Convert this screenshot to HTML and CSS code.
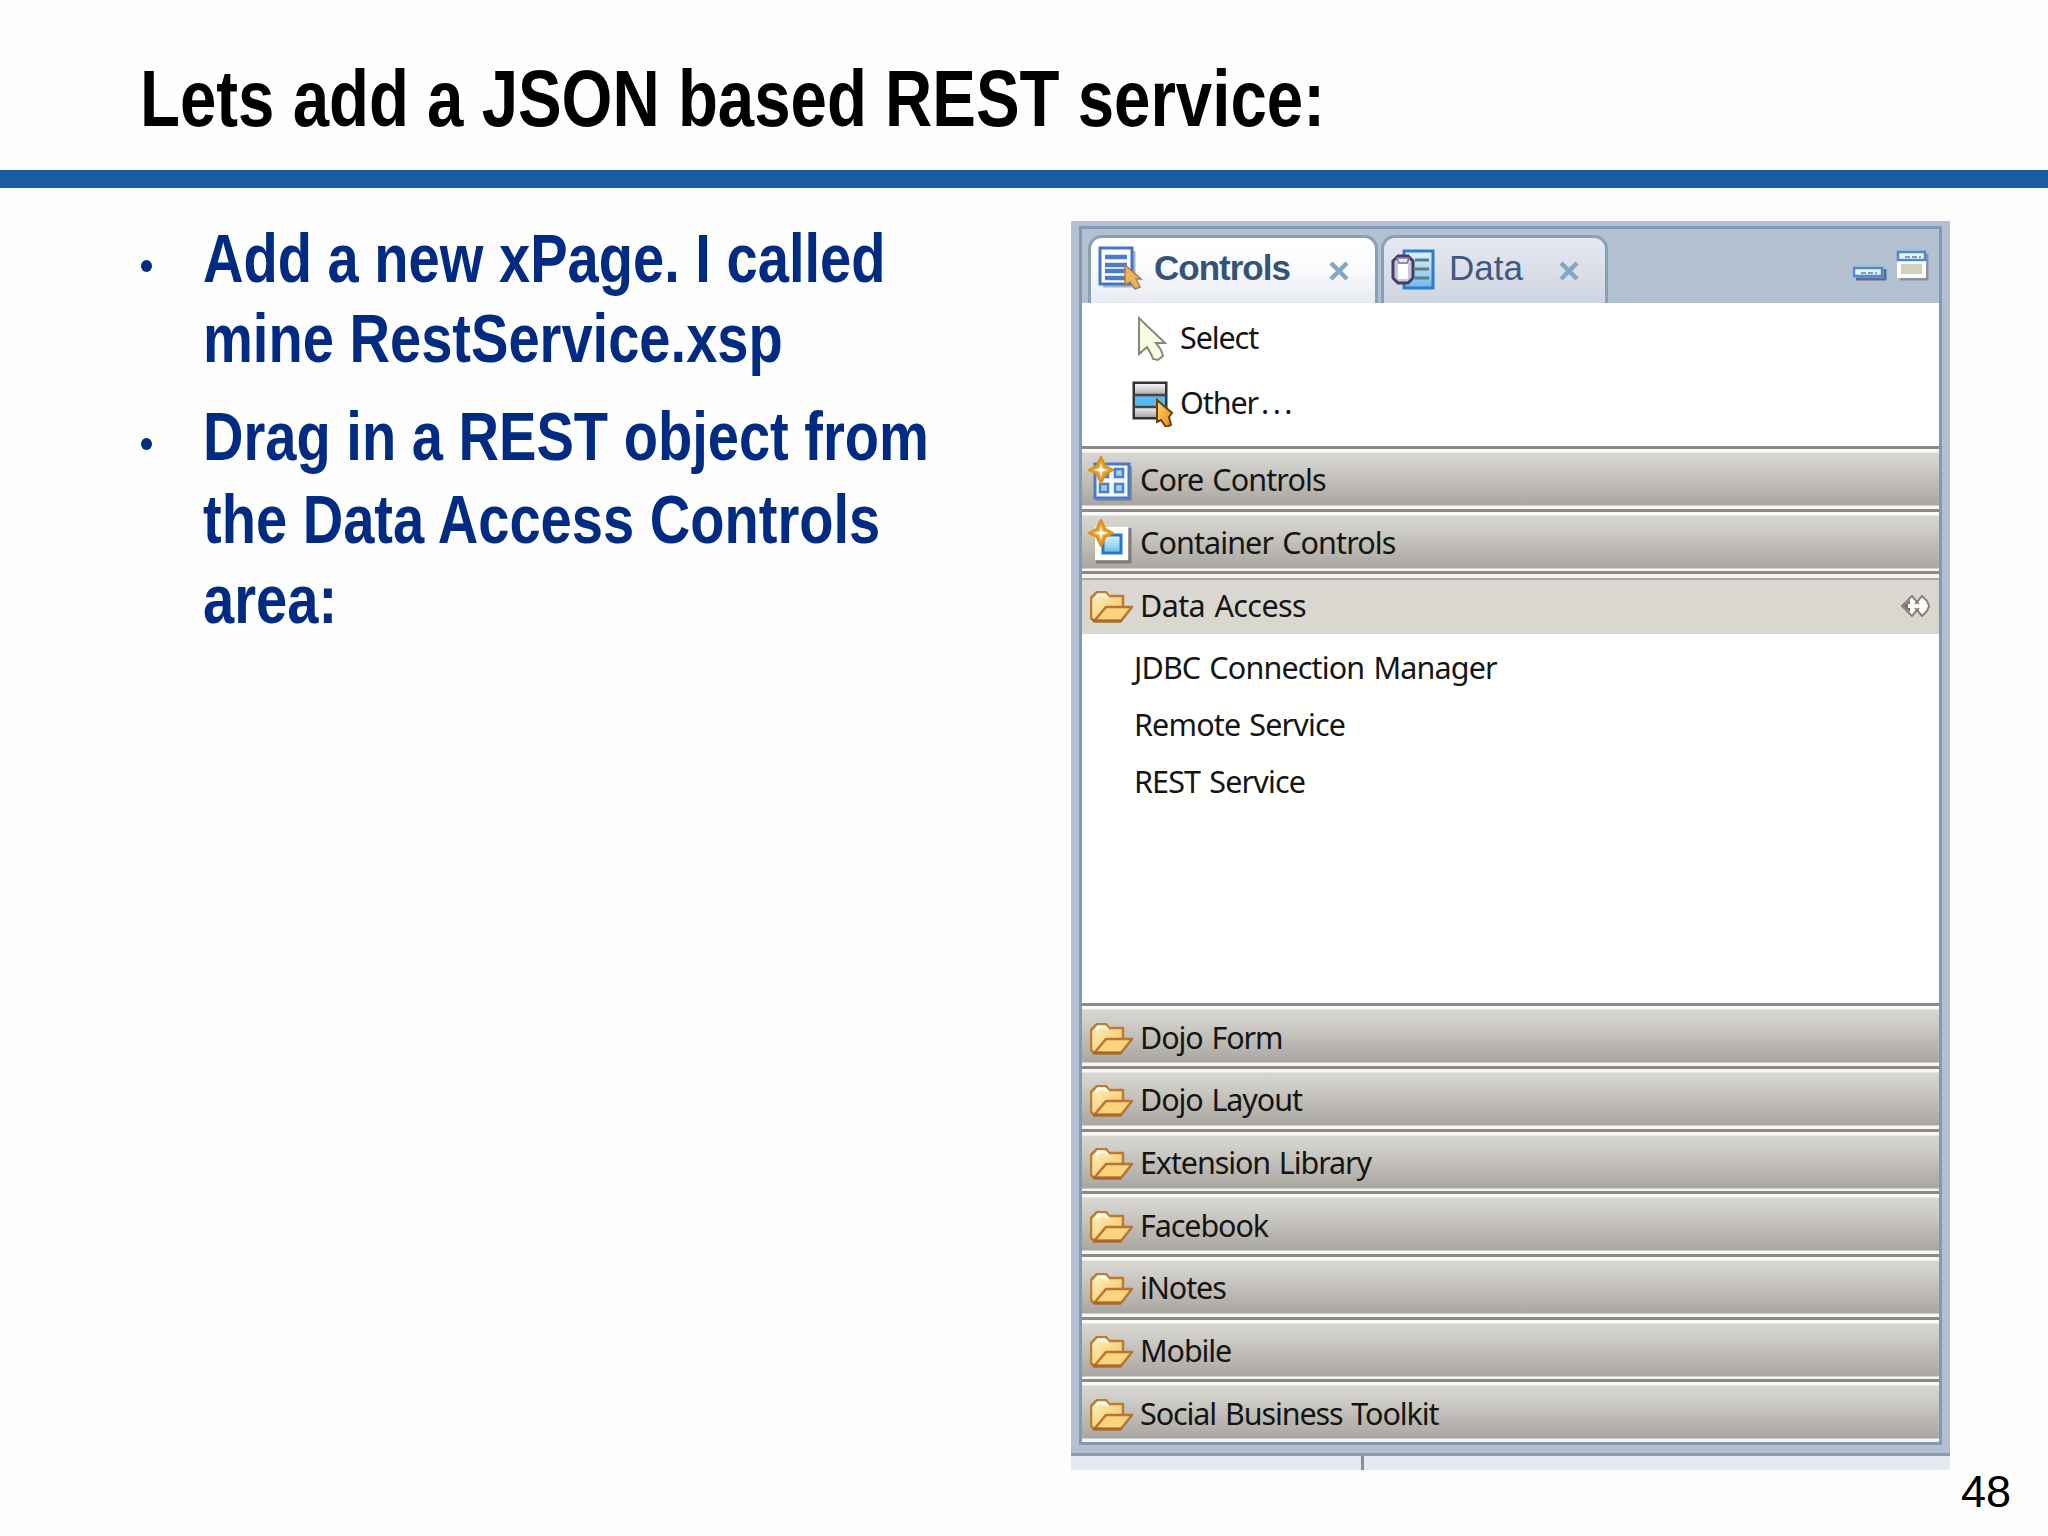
FILE: index.html
```
<!DOCTYPE html>
<html lang="en">

<head>
    <meta charset="UTF-8">
    <meta name="viewport" content="width=device-width, initial-scale=1.0">
    <title>Lets add a JSON based REST service</title>
    <link rel="stylesheet" href="styles.css">
</head>

<body>
    <!-- shared icons -->
    <svg class="sprite" width="0" height="0">
        <defs>
            <linearGradient id="gFolder" x1="0" y1="0" x2="1" y2="1">
                <stop offset="0" stop-color="#fff3c4" />
                <stop offset="1" stop-color="#f5bf56" />
            </linearGradient>
            <linearGradient id="gBlue" x1="0" y1="0" x2="0" y2="1">
                <stop offset="0" stop-color="#e2f6ff" />
                <stop offset="1" stop-color="#6dbbe9" />
            </linearGradient>
            <linearGradient id="gGrey" x1="0" y1="0" x2="0" y2="1">
                <stop offset="0" stop-color="#f4f4f4" />
                <stop offset="1" stop-color="#a9a9a9" />
            </linearGradient>
            <linearGradient id="gOrange" x1="0" y1="0" x2="1" y2="1">
                <stop offset="0" stop-color="#ffd873" />
                <stop offset="1" stop-color="#e58a10" />
            </linearGradient>
            <symbol id="folder" viewBox="0 0 44 32">
                <path d="M1 27V7l3-3 3-3h9l3 4h14v10L31 30H4z" fill="url(#gFolder)" stroke="#bd7b31" stroke-width="2.500" stroke-linejoin="round" />
                <path d="M5 29l11-13h26L31 30H5z" fill="#fbd47d" stroke="#b87430" stroke-width="2.500" stroke-linejoin="round" />
                <path d="M6 7l2-3h7l3 3" fill="none" stroke="#fffbe8" stroke-width="3" />
                <path d="M3 30h28" stroke="#a8672b" stroke-width="3" />
            </symbol>
            <symbol id="star" viewBox="0 0 26 28">
                <path d="M13 1l4 9 8 4-8 4-4 9-4-9-8-4 8-4z" fill="#f5aa2d" stroke="#e0921f" stroke-width="2.500" stroke-linejoin="round" />
                <path d="M13 7l1.500 5.500 5.500 1.500-5.500 1.500-1.500 5.500-1.500-5.500-5.500-1.500 5.500-1.500z" fill="#fff" />
            </symbol>
            <symbol id="cross" viewBox="0 0 20 20">
                <path d="M2 2l16 16M18 2L2 18" stroke="#82a7c0" stroke-width="4.500" />
            </symbol>
        </defs>
    </svg>

    <header class="title">
        <h1>Lets add a JSON based REST service:</h1>
    </header>

    <main class="slide">
        <ul class="bullets">
            <li>
                <span class="dot"></span>
                <p>Add a new xPage. I called<br>mine RestService.xsp</p>
            </li>
            <li>
                <span class="dot"></span>
                <p><span class="first">Drag in a REST object from</span>the Data Access Controls<br>area:</p>
            </li>
        </ul>

        <section class="panel">
            <div class="window">
                <div class="tabs">
                    <div class="tab active">
                        <svg class="tab-icon" width="46" height="46" viewBox="0 0 46 46">
                            <path d="M5 41h31V6" fill="none" stroke="#a9b4c9" stroke-width="3" />
                            <rect x="2" y="3" width="32" height="36" fill="#fff" stroke="#4476c8" stroke-width="3" />
                            <path d="M7 12h22M7 20h22M7 26h20M7 33h20" stroke="#4a7ccd" stroke-width="4.500" />
                            <path d="M27 20v20l5-3 5 7 5-2-4-8h5z" fill="#e9b65c" stroke="#a97a4c" stroke-width="1.500" />
                        </svg>
                        <span>Controls</span>
                        <svg class="close" width="20" height="20"><use href="#cross" /></svg>
                    </div>
                    <div class="tab data">
                        <svg class="tab-icon" width="46" height="46" viewBox="0 0 46 46">
                            <rect x="13" y="6" width="29" height="37" fill="url(#gBlue)" stroke="#2d7bd0" stroke-width="3" />
                            <path d="M24 15h14M24 24h14M24 33h14" stroke="#5e7d80" stroke-width="3" />
                            <path d="M2 16l5-5h10l5 5v17l-5 5H7l-5-5z" fill="#c9c6dc" stroke="#463d66" stroke-width="3" />
                            <path d="M7 19h10v15H7z" fill="#fff" />
                            <path d="M6 13h12l-2 5H8z" fill="#eceaf4" stroke="#7d7799" stroke-width="1.500" />
                        </svg>
                        <span>Data</span>
                        <svg class="close" width="20" height="20"><use href="#cross" /></svg>
                    </div>
                    <svg class="window-buttons" width="76" height="34" viewBox="0 0 76 34">
                        <path d="M3 29h29V19" fill="none" stroke="#5c6f90" stroke-width="3" />
                        <rect x="1" y="18" width="28" height="8" fill="#e9f6ff" stroke="#4d87d6" stroke-width="2.500" />
                        <path d="M47 29h27V4" fill="none" stroke="#8a93a5" stroke-width="3" />
                        <rect x="46" y="12" width="25" height="14" fill="#d2d1c4" stroke="#fffff8" stroke-width="4" />
                        <rect x="45" y="2" width="27" height="8" fill="#e9f6ff" stroke="#4d87d6" stroke-width="2.500" />
                        <path d="M8 23h16M52 7h16" stroke="#7f9dbd" stroke-width="2" stroke-dasharray="5 2" />
                    </svg>
                </div>

                <div class="tools">
                    <div class="tool">
                        <svg width="46" height="48" viewBox="0 0 46 48">
                            <path d="M10 4v36l8-7 5 9 1 3 5 1 5-4-2-6-5-7h9z" fill="#fbfce2" stroke="#85877a" stroke-width="2" />
                        </svg>
                        <span>Select</span>
                    </div>
                    <div class="tool">
                        <svg width="46" height="48" viewBox="0 0 46 48">
                            <rect x="5" y="4" width="32" height="35" fill="url(#gGrey)" stroke="#333" stroke-width="3" />
                            <rect x="6" y="5" width="30" height="11" fill="url(#gGrey)" />
                            <rect x="6" y="17" width="30" height="10" fill="#58b8f0" />
                            <rect x="6" y="28" width="30" height="10" fill="url(#gGrey)" />
                            <path d="M5 16h32M5 28h32" stroke="#444" stroke-width="2.500" />
                            <path d="M28 21v22l4-2 5 7 5-2-2-8 3-4z" fill="url(#gOrange)" stroke="#6d3f0b" stroke-width="2" />
                        </svg>
                        <span>Other<span class="ellipsis">...</span></span>
                    </div>
                </div>

                <div class="group">
                    <svg class="new-icon" width="44" height="46" viewBox="0 0 44 46">
                        <path d="M8 44h35V10" fill="none" stroke="#8b8f92" stroke-width="2" />
                        <rect x="7" y="8" width="34" height="34" fill="#f2f8ff" stroke="#4b7bc4" stroke-width="3" />
                        <path d="M27 13h8v8h-8zM12 28h8v8h-8zM27 28h8v8h-8zM12 13h8v8h-8z" fill="#a9cbee" stroke="#4a80cc" stroke-width="2.500" />
                        <use href="#star" x="0" y="0" width="26" height="28" />
                    </svg>
                    <span>Core Controls</span>
                </div>
                <div class="group">
                    <svg class="new-icon" width="44" height="46" viewBox="0 0 44 46">
                        <path d="M8 43h34V9" fill="none" stroke="#7f7c7a" stroke-width="3" />
                        <rect x="7" y="8" width="33" height="33" fill="#fff" />
                        <rect x="15" y="16" width="18" height="18" fill="url(#gBlue)" stroke="#2878c8" stroke-width="3" />
                        <use href="#star" x="0" y="0" width="26" height="28" />
                    </svg>
                    <span>Container Controls</span>
                </div>
                <div class="group open">
                    <svg class="folder" width="44" height="32"><use href="#folder" /></svg>
                    <span>Data Access</span>
                    <svg class="pin" width="30" height="22" viewBox="0 0 30 22">
                        <path d="M1 11L11 1l5 6 5-6 5 5 2 5-2 5-5 5-5-6-5 6z" fill="#fff" stroke="#85827c" stroke-width="2" />
                        <path d="M2 11l7-6v4H7v4h2v4z" fill="#77746f" />
                        <path d="M14 9l2-2 2 2M14 13l2 2 2-2" fill="none" stroke="#77746f" stroke-width="1.500" />
                    </svg>
                </div>
                <ul class="items">
                    <li>JDBC Connection Manager</li>
                    <li>Remote Service</li>
                    <li>REST Service</li>
                </ul>
                <div class="group">
                    <svg class="folder" width="44" height="32"><use href="#folder" /></svg>
                    <span>Dojo Form</span>
                </div>
                <div class="group">
                    <svg class="folder" width="44" height="32"><use href="#folder" /></svg>
                    <span>Dojo Layout</span>
                </div>
                <div class="group">
                    <svg class="folder" width="44" height="32"><use href="#folder" /></svg>
                    <span>Extension Library</span>
                </div>
                <div class="group">
                    <svg class="folder" width="44" height="32"><use href="#folder" /></svg>
                    <span>Facebook</span>
                </div>
                <div class="group">
                    <svg class="folder" width="44" height="32"><use href="#folder" /></svg>
                    <span>iNotes</span>
                </div>
                <div class="group">
                    <svg class="folder" width="44" height="32"><use href="#folder" /></svg>
                    <span>Mobile</span>
                </div>
                <div class="group">
                    <svg class="folder" width="44" height="32"><use href="#folder" /></svg>
                    <span>Social Business Toolkit</span>
                </div>
            </div>
            <div class="status"><span></span></div>
        </section>
    </main>

    <footer class="page-number">48</footer>
</body>

</html>
```

FILE: styles.css
```
* {
    box-sizing: border-box;
}

body {
    margin: 0;
    width: 2048px;
    height: 1536px;
    overflow: hidden;
    background-color: #fefefe;
    font-family: "Liberation Sans", Arial, sans-serif;
}

.sprite {
    display: block;
}

ul {
    list-style: none;
    margin: 0;
    padding: 0;
}

.title {
    height: 188px;
    padding: 52px 0 0 140px;
    border-bottom: 18px solid #1a5ca3;
}

/* narrow bold look of the slide texts */
h1,
.bullets p {
    margin: 0;
    font-weight: bold;
    white-space: nowrap;
    transform: scaleX(.8175);
    transform-origin: 0 0;
}

h1 {
    font-size: 80px;
    line-height: 94px;
    color: #000;
}

.slide {
    display: flex;
    height: 1282px;
}

.bullets {
    width: 1071px;
    padding: 31px 0 0 141px;
    color: #002b82;
}

.bullets li {
    display: flex;
    margin-bottom: 18px;
}

.bullets p {
    width: 860px;
    font-size: 68.6px;
    line-height: 80px;
}

.first {
    display: block;
    margin-bottom: 3px;
}

.dot {
    flex: none;
    width: 11px;
    height: 12px;
    margin: 41px 51px 0 0;
    border-radius: 50%;
    background-color: #002b82;
}

.panel {
    width: 879px;
    height: 1249px;
    margin-top: 33px;
    padding: 5px 8px 0;
    background-color: #b2c0d2;
}

.window {
    height: 1219px;
    border: 3px solid #7f9bb3;
    background-color: #fff;
}

.tabs {
    display: flex;
    height: 74px;
    padding: 6px 10px 0 6px;
    background-color: #b2c0d0;
}

.tab {
    display: flex;
    align-items: flex-start;
    height: 68px;
    border: 3px solid #86a0b6;
    border-bottom: 0;
    border-radius: 14px 14px 0 0;
    font-size: 35px;
    line-height: 40px;
    color: #41597e;
}

.tab span {
    padding-top: 10px;
}

.active {
    width: 290px;
    margin-right: 3px;
    padding-left: 7px;
    background: linear-gradient(#fff, #fbfcfe 40%, #e8ebf3);
}

.active span {
    width: 175px;
    margin-left: 10px;
    font-weight: bold;
    letter-spacing: -1px;
    color: #365377;
}

.data {
    width: 227px;
    padding-left: 7px;
    background: linear-gradient(#e6e8f2, #cfd6e1);
}

.data span {
    width: 110px;
    margin-left: 12px;
}

.tab-icon {
    flex: none;
    margin-top: 7px;
}

.close {
    margin-top: 23px;
}

.window-buttons {
    margin: 15px 0 0 auto;
}

.tools {
    height: 143px;
    padding: 11px 0 0 47px;
}

.tool {
    display: flex;
    height: 65px;
}

.tool span {
    margin-left: 5px;
}

.tool .ellipsis {
    margin-left: 3px;
    letter-spacing: 3.5px;
}

.tool,
.group,
.items {
    font-family: "Noto Sans", "DejaVu Sans", sans-serif;
    font-size: 30.5px;
    line-height: 46px;
    letter-spacing: -1.1px;
    word-spacing: 2px;
    color: #151515;
}

.group {
    display: flex;
    align-items: center;
    height: 62.65px;
    padding: 1px 8px 0 8px;
    border-top: 3px solid #8b8986;
    background: linear-gradient(#faf9f6 3px, #d8d6d0 4px, #d0cec8 16px, #aaa6a2 56px, #f7f6f4 57px);
}

.group span {
    margin-left: 6px;
}

.new-icon {
    flex: none;
    margin: 0 0 0 -2px;
}

.new-icon + span {
    margin-left: 8px;
    letter-spacing: -.9px;
}

.folder {
    flex: none;
    margin-top: 4px;
}

.open {
    background: linear-gradient(#f5f3ef 4px, #aaa7a0 4px, #aaa7a0 6px, #dad7d0 6px, #d9d8ce);
}

.open span {
    letter-spacing: -.6px;
}

.pin {
    margin: 3px 0 0 auto;
}

.items {
    height: 369.5px;
    padding: 5px 0 0 52px;
    line-height: 57px;
    letter-spacing: -.85px;
    background-color: #fffffe;
}

/* strip of the next view below the window */
.status {
    height: 17px;
    margin: 8px -8px 0;
    border-top: 3px solid #8b9bb1;
    background-color: #e7e9f2;
}

.status span {
    display: block;
    width: 3px;
    height: 14px;
    margin-left: 290px;
    background-color: #8c8e95;
}

.page-number {
    padding-right: 37px;
    text-align: right;
    font-size: 45px;
    line-height: 43px;
    color: #000;
}
```
